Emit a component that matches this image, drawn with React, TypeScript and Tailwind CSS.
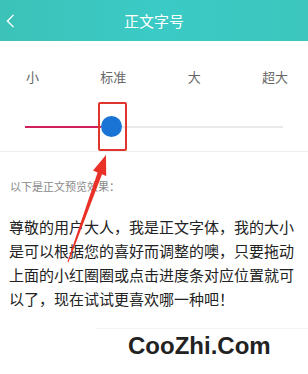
const FONT = { fontFamily: '"Noto Sans CJK SC", "Noto Sans", sans-serif' };

function BackIcon() {
  return (
    <svg viewBox="0 0 10 16" fill="none" stroke="currentColor" strokeWidth="1.6" className="h-[14px] w-[9px]" aria-hidden>
      <path d="M8.5 1 1.5 8l7 7" />
    </svg>
  );
}

const sizes = ["小", "标准", "大", "超大"];

export default function App() {
  return (
    <div className="relative h-[374px] w-[308px] overflow-hidden bg-white" style={FONT}>
      <header className="flex h-[41px] items-center bg-gradient-to-r from-[#3cc2b8] via-[#3bcac6] to-[#3cc6bd] px-[6px] text-white">
        <BackIcon />
        <h1 className="flex-1 pr-[9px] text-center text-[15px] leading-none">正文字号</h1>
      </header>

      <div className="mt-[27px] flex justify-between pl-[26px] pr-[20px] text-[13px] leading-[18px] text-[#666]">
        {sizes.map((s) => (
          <span key={s}>{s}</span>
        ))}
      </div>

      <div className="ml-[25px] mr-[25px] mt-[30px] flex items-center">
        <div className="h-[2px] w-[76px] bg-[#d4205a]" />
        <div className="relative">
          <div className="size-[21px] rounded-full bg-[#1a74d6]" />
          <div className="absolute left-[-3px] top-[-14px] h-[49px] w-[29px] rounded-[2px] border-2 border-[#e0352c]" />
        </div>
        <div className="h-[2px] flex-1 bg-[#e9e9e9]" />
      </div>

      <div className="mt-[14px] h-px bg-[#efefef]" />

      <p className="mt-[26px] px-[10px] text-[11px] leading-[16px] text-[#8a8a8a]">以下是正文预览效果：</p>

      <p className="mt-[21px] w-[297px] pl-[9px] text-[15px] leading-[24px] text-[#222]">
        尊敬的用户大人，我是正文字体，我的大小是可以根据您的喜好而调整的噢，只要拖动上面的小红圈圈或点击进度条对应位置就可以了，现在试试更喜欢哪一种吧！
      </p>

      <div className="ml-[95px] mt-[17px] border-t border-[#f3f3f3] pt-[3px]">
        <p
          className="pl-[33px] text-[24px] font-bold leading-[28px] text-[#222]"
          style={{ fontFamily: '"Liberation Sans", Arial, sans-serif' }}
        >
          CooZhi.Com
        </p>
      </div>

      <svg className="pointer-events-none absolute left-0 top-0" width="308" height="374" aria-hidden>
        <polygon
          points="106,155 106.2,176 102,174.2 68.5,262.2 67.5,261.8 97.6,172.6 93,170.5"
          fill="#ea3127"
        />
      </svg>
    </div>
  );
}
